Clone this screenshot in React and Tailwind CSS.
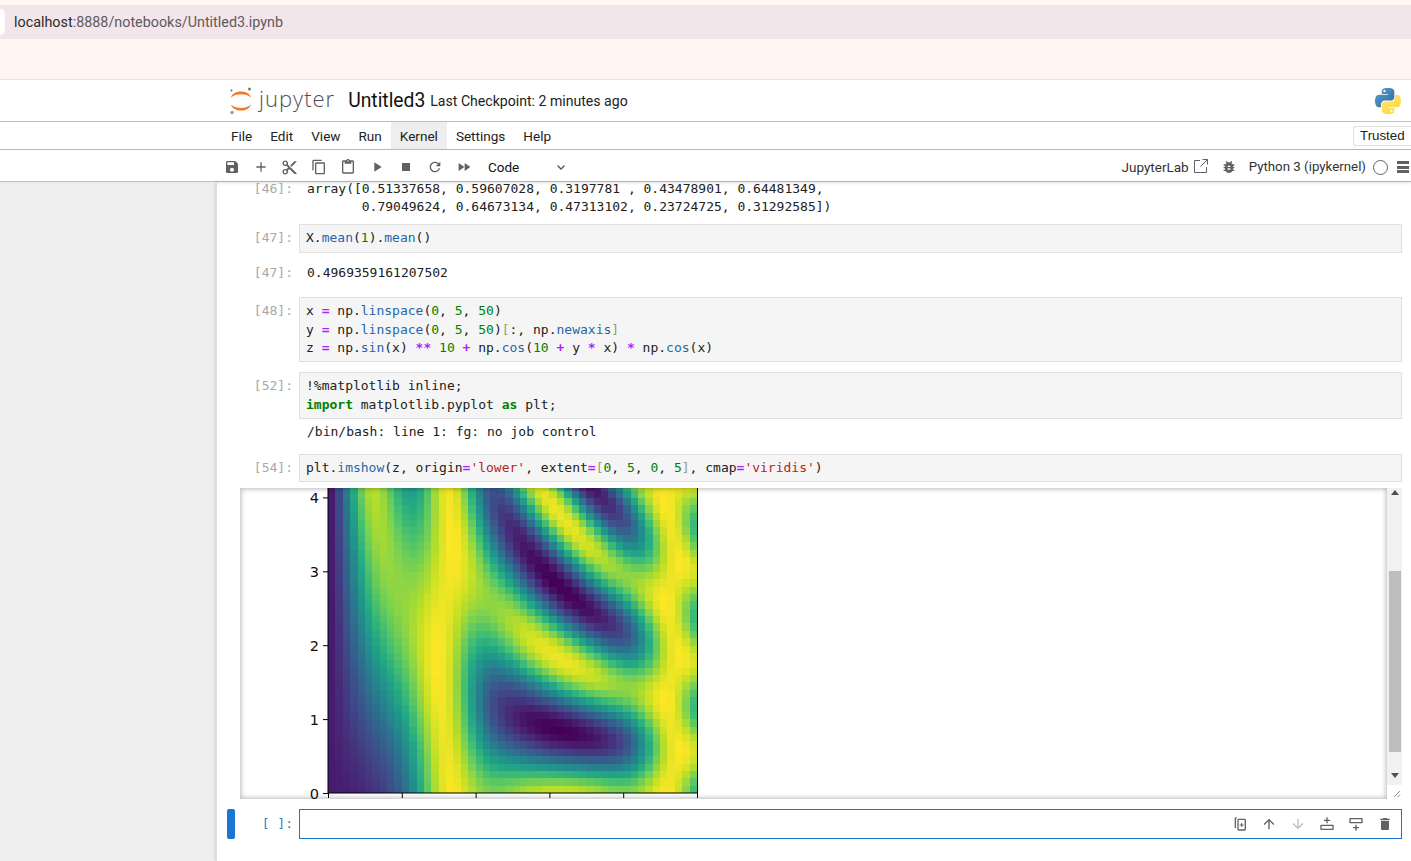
import { useMemo } from 'react';

const VIRIDIS = ['#440154', '#482475', '#414487', '#355f8d', '#2a788e', '#21918c', '#22a884', '#44bf70', '#7ad151', '#bddf26', '#fde725'];

const toRgb = (hex) => [1, 3, 5].map((i) => parseInt(hex.slice(i, i + 2), 16));

const viridis = (t) => {
  const p = Math.min(Math.max(t, 0), 1) * (VIRIDIS.length - 1);
  const i = Math.min(Math.floor(p), VIRIDIS.length - 2);
  const a = toRgb(VIRIDIS[i]);
  const b = toRgb(VIRIDIS[i + 1]);
  const f = p - i;
  return `rgb(${a.map((v, k) => Math.round(v + (b[k] - v) * f)).join(',')})`;
};

const Icon = ({ d, size = 16, color = '#616161', viewBox = '0 0 24 24', className = '' }) => (
  <svg width={size} height={size} viewBox={viewBox} className={className} fill={color}>
    <path d={d} />
  </svg>
);

const ICONS = {
  save: 'M17 3H5c-1.11 0-2 .9-2 2v14c0 1.1.89 2 2 2h14c1.1 0 2-.9 2-2V7l-4-4zm-5 16c-1.66 0-3-1.34-3-3s1.34-3 3-3 3 1.34 3 3-1.34 3-3 3zm3-10H5V5h10v4z',
  add: 'M19 13h-6v6h-2v-6H5v-2h6V5h2v6h6v2z',
  cut: 'M9.64 7.64c.23-.5.36-1.05.36-1.64 0-2.21-1.79-4-4-4S2 3.79 2 6s1.79 4 4 4c.59 0 1.14-.13 1.64-.36L10 12l-2.36 2.36C7.14 14.13 6.59 14 6 14c-2.21 0-4 1.79-4 4s1.79 4 4 4 4-1.79 4-4c0-.59-.13-1.14-.36-1.64L12 14l7 7h3v-1L9.64 7.64zM6 8c-1.1 0-2-.89-2-2s.9-2 2-2 2 .89 2 2-.9 2-2 2zm0 12c-1.1 0-2-.89-2-2s.9-2 2-2 2 .89 2 2-.9 2-2 2zm6-7.5c-.28 0-.5-.22-.5-.5s.22-.5.5-.5.5.22.5.5-.22.5-.5.5zM19 3l-6 6 2 2 7-7V3h-3z',
  copy: 'M16 1H4c-1.1 0-2 .9-2 2v14h2V3h12V1zm3 4H8c-1.1 0-2 .9-2 2v14c0 1.1.9 2 2 2h11c1.1 0 2-.9 2-2V7c0-1.1-.9-2-2-2zm0 16H8V7h11v14z',
  paste: 'M19 2h-4.18C14.4.84 13.3 0 12 0c-1.3 0-2.4.84-2.82 2H5c-1.1 0-2 .9-2 2v16c0 1.1.9 2 2 2h14c1.1 0 2-.9 2-2V4c0-1.1-.9-2-2-2zm-7 0c.55 0 1 .45 1 1s-.45 1-1 1-1-.45-1-1 .45-1 1-1zm7 18H5V4h2v3h10V4h2v16z',
  run: 'M8 5v14l11-7z',
  stop: 'M6 6h12v12H6z',
  refresh: 'M17.65 6.35C16.2 4.9 14.21 4 12 4c-4.42 0-7.99 3.58-7.99 8s3.57 8 7.99 8c3.73 0 6.84-2.55 7.73-6h-2.08c-.82 2.33-3.04 4-5.65 4-3.31 0-6-2.69-6-6s2.69-6 6-6c1.66 0 3.14.69 4.22 1.78L13 11h7V4l-2.35 2.35z',
  fastForward: 'M4 18l8.5-6L4 6v12zm9-12v12l8.5-6L13 6z',
  bug: 'M20 8h-2.81c-.45-.78-1.07-1.45-1.82-1.96L17 4.41 15.59 3l-2.17 2.17C12.96 5.06 12.49 5 12 5c-.49 0-.96.06-1.41.17L8.41 3 7 4.41l1.62 1.63C7.88 6.55 7.26 7.22 6.81 8H4v2h2.09c-.05.33-.09.66-.09 1v1H4v2h2v1c0 .34.04.67.09 1H4v2h2.81c1.04 1.79 2.97 3 5.19 3s4.15-1.21 5.19-3H20v-2h-2.09c.05-.33.09-.66.09-1v-1h2v-2h-2v-1c0-.34-.04-.67-.09-1H20V8zm-6 8h-4v-2h4v2zm0-4h-4v-2h4v2z',
  up: 'M4 12l1.41 1.41L11 7.83V20h2V7.83l5.58 5.59L20 12l-8-8-8 8z',
  down: 'M20 12l-1.41-1.41L13 16.17V4h-2v12.17l-5.58-5.59L4 12l8 8 8-8z',
  trash: 'M6 19c0 1.1.9 2 2 2h8c1.1 0 2-.9 2-2V7H6v12zM19 4h-3.5l-1-1h-5l-1 1H5v2h14V4z',
  duplicate: 'M7 2H6C4.9 2 4 2.9 4 4v14h2V4h1V2zm3 2c-1.1 0-2 .9-2 2v14c0 1.1.9 2 2 2h9c1.1 0 2-.9 2-2V6c0-1.1-.9-2-2-2h-9zm0 2h9v14h-9V6zm3.7 4.5v2.2h-2.2v1.6h2.2v2.2h1.6v-2.2h2.2v-1.6h-2.2v-2.2h-1.6z',
  insertAbove: 'M3 13h18c.6 0 1 .4 1 1v6c0 .6-.4 1-1 1H3c-.6 0-1-.4-1-1v-6c0-.6.4-1 1-1zm1 2v4h16v-4H4zm7-13h2v3.5h3.5v2H13V11h-2V7.500H7.500v-2H11V2z',
  insertBelow: 'M3 3h18c.6 0 1 .4 1 1v6c0 .6-.4 1-1 1H3c-.6 0-1-.4-1-1V4c0-.6.4-1 1-1zm1 2v4h16V5H4zm7 8h2v3.500h3.500v2H13V22h-2v-3.500H7.500v-2H11V13z',
};

const PYTHON_HALF =
  'M54.9 0C50.3 0 46 .4 42.1 1.1 30.8 3.100 28.700 7.300 28.700 15v10.100h26.800v3.500H18.600C10.800 28.600 4 33.300 1.900 42c-2.500 10-2.600 16.200 0 26.600 1.900 7.800 6.400 13.400 14.200 13.400h9.200V69.900c0-8.900 7.700-16.700 16.900-16.700H69c7.500 0 13.400-6.100 13.400-13.600V15c0-7.200-6.100-12.600-13.400-13.900C64.400.3 59.500 0 54.900 0zM40.400 8.200c2.800 0 5 2.300 5 5.100 0 2.800-2.200 5.100-5 5.100s-5-2.300-5-5.100c0-2.800 2.200-5.100 5-5.100z';

const mono = 'font-["DejaVu_Sans_Mono",monospace] text-[13px] leading-[18.4px] whitespace-pre';
const ui = 'font-["Roboto",sans-serif]';

const N = ({ children }) => <span className="text-[#008000]">{children}</span>;
const O = ({ children }) => <span className="font-bold text-[#aa22ff]">{children}</span>;
const A = ({ children }) => <span className="text-[#1f66ad]">{children}</span>;
const B = ({ children }) => <span className="text-[#999977]">{children}</span>;
const S = ({ children }) => <span className="text-[#ba2121]">{children}</span>;
const K = ({ children }) => <span className="font-bold text-[#008000]">{children}</span>;

const Prompt = ({ children, className = 'pt-[5px] text-[#a8a8a8]' }) => (
  <div className={`w-[76px] shrink-0 pr-[6px] text-right ${mono} ${className}`}>{children}</div>
);

const InputCell = ({ n, children, className = '' }) => (
  <div className={`flex ${className}`}>
    <Prompt>[{n}]:</Prompt>
    <div className={`flex-1 border border-[#e0e0e0] bg-[#f5f5f5] px-[6px] py-[4px] text-[#212121] ${mono}`}>{children}</div>
  </div>
);

const OutputCell = ({ n, children, className = '' }) => (
  <div className={`flex ${className}`}>
    <Prompt className="text-[#a8a8a8]">{n ? `[${n}]:` : ''}</Prompt>
    <div className={`px-[8px] text-[#212121] ${mono}`}>{children}</div>
  </div>
);

const Heatmap = () => {
  const cells = useMemo(() => {
    const size = 50;
    const at = (i) => (5 * i) / (size - 1);
    const z = [];
    for (let r = 0; r < size; r++) {
      for (let c = 0; c < size; c++) {
        const x = at(c);
        const y = at(r);
        z.push({ r, c, v: Math.sin(x) ** 10 + Math.cos(10 + y * x) * Math.cos(x) });
      }
    }
    const values = z.map((p) => p.v);
    const min = Math.min(...values);
    const max = Math.max(...values);
    return z.map((p) => ({ ...p, fill: viridis((p.v - min) / (max - min)) }));
  }, []);

  // drawn in box pixels: axes left 88, right 457, bottom 305
  const xTicks = [0, 1, 2, 3, 4, 5].map((i) => 88.5 + i * 73.8);
  const yTicks = [0, 1, 2, 3, 4].map((i) => 305.5 - i * 73.9);

  return (
    <svg width="480" height="311" className="block">
      <svg x="88" y="-64" width="369" height="369" viewBox="0 0 50 50" preserveAspectRatio="none" shapeRendering="crispEdges">
        {cells.map((p) => (
          <rect key={`${p.r}-${p.c}`} x={p.c} y={49 - p.r} width="1.02" height="1.02" fill={p.fill} />
        ))}
      </svg>
      <path d="M88 0V305H457.500V0" fill="none" stroke="#000" strokeWidth="1" />
      {xTicks.map((x) => (
        <line key={x} x1={x} x2={x} y1="305" y2="310" stroke="#000" />
      ))}
      {yTicks.map((y, i) => (
        <g key={y}>
          <line x1="83" x2="88" y1={y} y2={y} stroke="#000" />
          <text x="79" y={y + 5.500} textAnchor="end" fontSize="14.500" fill="#111" fontFamily="DejaVu Sans, sans-serif">
            {i}
          </text>
        </g>
      ))}
    </svg>
  );
};

const JupyterLogo = () => (
  <svg width="24" height="30" viewBox="0 0 24 30" className="shrink-0">
    <path d="M2 11.500C4 3.500 20 3.500 22 11.500C18 7 6 7 2 11.500z" fill="#f37726" />
    <path d="M2 18.500C4 26.500 20 26.500 22 18.500C18 23 6 23 2 18.500z" fill="#f37726" />
    <circle cx="20.500" cy="3" r="1.500" fill="#767677" />
    <circle cx="3" cy="26.500" r="1.800" fill="#9e9e9e" />
    <circle cx="2.500" cy="4.500" r="1" fill="#616262" />
  </svg>
);

const PythonLogo = () => (
  <svg width="26" height="26" viewBox="0 0 111 111" className="shrink-0">
    <defs>
      <linearGradient id="pyBlue" x1="0" y1="0" x2="1" y2="1">
        <stop offset="0" stopColor="#5a9fd4" />
        <stop offset="1" stopColor="#306998" />
      </linearGradient>
      <linearGradient id="pyYellow" x1="0" y1="0" x2="1" y2="1">
        <stop offset="0" stopColor="#ffd43b" />
        <stop offset="1" stopColor="#ffe873" />
      </linearGradient>
    </defs>
    <path d={PYTHON_HALF} fill="url(#pyBlue)" />
    <path d={PYTHON_HALF} fill="url(#pyYellow)" transform="rotate(180 55.500 55.500)" />
  </svg>
);

const MENU = ['File', 'Edit', 'View', 'Run', 'Kernel', 'Settings', 'Help'];
const TOOLBAR = [
  { d: ICONS.save, size: 16 },
  { d: ICONS.add, size: 16 },
  { d: ICONS.cut, size: 17 },
  { d: ICONS.copy, size: 16 },
  { d: ICONS.paste, size: 16 },
  { d: ICONS.run, size: 16 },
  { d: ICONS.stop, size: 16 },
  { d: ICONS.refresh, size: 16 },
  { d: ICONS.fastForward, size: 16 },
];
const CELL_ACTIONS = [
  { d: ICONS.duplicate, color: '#616161' },
  { d: ICONS.up, color: '#616161' },
  { d: ICONS.down, color: '#bdbdbd' },
  { d: ICONS.insertAbove, color: '#616161' },
  { d: ICONS.insertBelow, color: '#616161' },
  { d: ICONS.trash, color: '#616161' },
];

const App = () => {
  return (
    <div className="flex h-[861px] w-[1411px] flex-col overflow-hidden bg-white">
      {/* Browser bar */}
      <div className="h-[80px] shrink-0 border-b border-[#eddede] bg-[#fff5f3] pt-[5px]">
        <div className={`flex h-[34px] items-center bg-[#f2e6ea] pt-[2px] text-[14.35px] ${ui}`}>
          <div className="-mt-[2px] h-[26px] w-[5px] rounded-r-full bg-white" />
          <span className="ml-[9px] text-[#2b2b2b]">localhost</span>
          <span className="text-[#5e5a5c]">:8888/notebooks/Untitled3.ipynb</span>
        </div>
      </div>

      {/* Notebook header */}
      <div className="flex h-[42px] shrink-0 items-center border-b border-[#bdbdbd] pl-[229px] pr-[10px]">
        <JupyterLogo />
        <span className="ml-[6px] -mt-[4px] font-['Open_Sans',sans-serif] text-[22px] font-light tracking-[1px] text-[#4f4f4f]">jupyter</span>
        <span className={`ml-[13px] mt-[2px] text-[19.300px] text-[#111] ${ui}`}>Untitled3</span>
        <span className={`ml-[5px] mt-[3px] text-[14.100px] text-[#222] ${ui}`}>Last Checkpoint: 2 minutes ago</span>
        <div className="ml-auto">
          <PythonLogo />
        </div>
      </div>

      {/* Menu */}
      <div className="flex h-[28px] shrink-0 items-stretch border-b border-[#bdbdbd] pl-[222px]">
        {MENU.map((item) => (
          <div
            key={item}
            className={`flex items-center px-[9px] pt-[2px] text-[13.550px] text-[#222] ${ui} ${item === 'Kernel' ? 'bg-[#eeeeee]' : ''}`}
          >
            {item}
          </div>
        ))}
        <div className="ml-auto flex h-[20px] w-[58px] items-center self-center rounded-l-[3px] border border-r-0 border-[#e0e0e0] pl-[6px] font-['Liberation_Sans',sans-serif] text-[13.300px] text-[#222]">
          Trusted
        </div>
      </div>

      {/* Toolbar */}
      <div className="flex h-[32px] shrink-0 items-center border-b border-[#bdbdbd] pl-[217px] pr-[2px] pt-[3px] shadow-[0_1px_3px_rgba(0,0,0,0.12)]">
        <div className="flex">
          {TOOLBAR.map((t) => (
            <div key={t.d} className="flex w-[29px] justify-center">
              <Icon d={t.d} size={t.size} />
            </div>
          ))}
        </div>
        <span className={`ml-[10px] text-[13.500px] text-[#111] ${ui}`}>Code</span>
        <svg width="12" height="12" viewBox="0 0 12 12" className="ml-[36px]" fill="none" stroke="#555" strokeWidth="1.300">
          <path d="M2.500 4.500L6 8l3.500-3.500" />
        </svg>
        <span className={`ml-auto text-[13.500px] text-[#333] ${ui}`}>JupyterLab</span>
        <svg width="14" height="14" viewBox="0 0 14 14" className="ml-[5px] -mt-[2px]" fill="none" stroke="#616161" strokeWidth="1">
          <path d="M6 1.500H.5v12h12V8M8.500.5h5v5M13.500.5L6.500 7.500" />
        </svg>
        <Icon d={ICONS.bug} size={16} className="ml-[13px]" />
        <span className={`ml-[12px] text-[13.300px] text-[#333] ${ui}`}>Python 3 (ipykernel)</span>
        <div className="ml-[7px] h-[15px] w-[15px] rounded-full border border-[#616161]" />
        <div className="ml-[9px] flex h-[12px] w-[12px] shrink-0 flex-col justify-between">
          <div className="h-[3px] bg-[#616161]" />
          <div className="h-[3px] bg-[#616161]" />
          <div className="h-[3px] bg-[#616161]" />
        </div>
      </div>

      {/* Body */}
      <div className="flex min-h-0 flex-1">
        <div className="w-[216px] shrink-0 bg-[#eeeeee]" />
        <div className="flex-1 border-l border-[#e0e0e0] pr-[9px] pl-[6px] shadow-[-1px_0_3px_rgba(0,0,0,0.12)]">
          {/* cell 46 output */}
          <OutputCell n="46" className="-mt-[2.5px]">
            <div>array([0.51337658, 0.59607028, 0.3197781 , 0.43478901, 0.64481349,</div>
            <div>{'       0.79049624, 0.64673134, 0.47313102, 0.23724725, 0.31292585])'}</div>
          </OutputCell>

          <InputCell n="47" className="mt-[8px]">
            <div>X.<A>mean</A>(<N>1</N>).<A>mean</A>()</div>
          </InputCell>

          <OutputCell n="47" className="mt-[11px]">0.4969359161207502</OutputCell>

          <InputCell n="48" className="mt-[15px]">
            <div>x <O>=</O> np.<A>linspace</A>(<N>0</N>, <N>5</N>, <N>50</N>)</div>
            <div>y <O>=</O> np.<A>linspace</A>(<N>0</N>, <N>5</N>, <N>50</N>)<B>[</B>:, np.<A>newaxis</A><B>]</B></div>
            <div>z <O>=</O> np.<A>sin</A>(x) <O>**</O> <N>10</N> <O>+</O> np.<A>cos</A>(<N>10</N> <O>+</O> y <O>*</O> x) <O>*</O> np.<A>cos</A>(x)</div>
          </InputCell>

          <InputCell n="52" className="mt-[10px]">
            <div>!%matplotlib inline;</div>
            <div><K>import</K> matplotlib.pyplot <K>as</K> plt;</div>
          </InputCell>

          <OutputCell className="mt-[4px]">/bin/bash: line 1: fg: no job control</OutputCell>

          <InputCell n="54" className="mt-[12px]">
            <div>plt.<A>imshow</A>(z, origin<O>=</O><S>'lower'</S>, extent<O>=</O><B>[</B><N>0</N>, <N>5</N>, <N>0</N>, <N>5</N><B>]</B>, cmap<O>=</O><S>'viridis'</S>)</div>
          </InputCell>

          {/* scrolled output */}
          <div className="mt-[6px] ml-[17px] flex h-[311px]">
            <div className="relative min-w-0 flex-1 overflow-hidden bg-white">
              <Heatmap />
              <div className="pointer-events-none absolute inset-0 shadow-[inset_0_0_5px_1px_rgba(0,0,0,0.28)]" />
            </div>
            <div className="flex w-[15px] shrink-0 flex-col items-center bg-[#f1f1f1]">
              <div className="mt-[1px] flex h-[8px] items-center justify-center">
                <div className="h-0 w-0 border-x-[4px] border-b-[5px] border-x-transparent border-b-[#505050]" />
              </div>
              <div className="mt-[74px] h-[181px] w-[12px] bg-[#bdbdbd]" />
              <div className="mt-[20px] flex h-[8px] items-center justify-center">
                <div className="h-0 w-0 border-x-[4px] border-t-[5px] border-x-transparent border-t-[#505050]" />
              </div>
              <div className="mt-auto flex h-[14px] w-full items-end justify-end bg-white p-px">
                <svg width="8" height="8" viewBox="0 0 8 8" stroke="#8a8a8a" strokeWidth="1">
                  <path d="M1 7L7 1M4.500 7L7 4.500" />
                </svg>
              </div>
            </div>
          </div>

          {/* active cell */}
          <div className="relative mt-[10px] flex">
            <div className="absolute top-0 bottom-0 left-[4px] w-[8px] rounded-[2px] bg-[#1976d2]" />
            <div className={`w-[76px] shrink-0 pt-[6px] pr-[6px] text-right text-[#307fc1] ${mono}`}>[ ]:</div>
            <div className="flex h-[30px] flex-1 items-center justify-end border border-[#1976d2] bg-white pr-[2px]">
              {CELL_ACTIONS.map((a) => (
                <div key={a.d} className="flex w-[29px] justify-center">
                  <Icon d={a.d} size={16} color={a.color} />
                </div>
              ))}
            </div>
          </div>
        </div>
      </div>
    </div>
  );
};

export default App;
